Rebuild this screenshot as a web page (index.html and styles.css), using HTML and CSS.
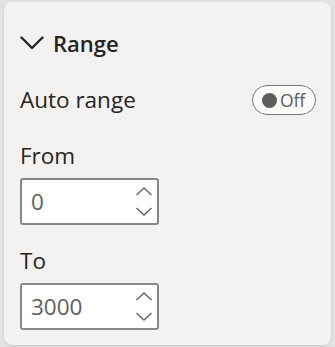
FILE: index.html
```html
<!DOCTYPE html>
<html>
  <head>
    <meta name="viewport" content="width=device-width,initial-scale=1.0">
    <title>Range</title>
    <link rel="stylesheet" href="styles.css">
  </head>
  <body>
    <div class="card">
      <div class="header">
        <svg class="chevron" width="24" height="14" viewBox="0 0 24 14">
          <path d="M1.5 1.5 L12 12 L22.5 1.5" fill="none" stroke="#252423" stroke-width="2.4" stroke-linecap="round" stroke-linejoin="round"/>
        </svg>
        <span class="title">Range</span>
      </div>

      <div class="row">
        <span class="label">Auto range</span>
        <div class="toggle">
          <span class="knob"></span>
          <span class="toggle-text">Off</span>
        </div>
      </div>

      <div class="field first">
        <div class="label">From</div>
        <div class="spin">
          <span class="value">0</span>
          <div class="arrows">
            <svg width="18" height="9" viewBox="0 0 18 9"><path d="M1.5 8 L9 1 L16.5 8" fill="none" stroke="#605e5c" stroke-width="1.3"/></svg>
            <svg width="18" height="9" viewBox="0 0 18 9"><path d="M1.5 1 L9 8 L16.5 1" fill="none" stroke="#605e5c" stroke-width="1.3"/></svg>
          </div>
        </div>
      </div>

      <div class="field">
        <div class="label">To</div>
        <div class="spin">
          <span class="value">3000</span>
          <div class="arrows">
            <svg width="18" height="9" viewBox="0 0 18 9"><path d="M1.5 8 L9 1 L16.5 8" fill="none" stroke="#605e5c" stroke-width="1.3"/></svg>
            <svg width="18" height="9" viewBox="0 0 18 9"><path d="M1.5 1 L9 8 L16.5 1" fill="none" stroke="#605e5c" stroke-width="1.3"/></svg>
          </div>
        </div>
      </div>
    </div>
  </body>
</html>
```

FILE: styles.css
```css
body {
  margin: 0;
  padding: 2px 4px 2px 4px;
  background: #e3e2e0;
  font-family: "Open Sans", "Noto Sans", sans-serif;
  color: #252423;
}

.card {
  height: 343px;
  box-sizing: border-box;
  background: #f3f2f1;
  border-radius: 8px;
  box-shadow: 0 1px 2px rgba(0, 0, 0, 0.12);
  padding: 25px 15px 0 16px;
}

.header {
  display: flex;
  align-items: center;
  height: 32px;
}

.chevron {
  margin-right: 9px;
}

.title {
  font-size: 22px;
  font-weight: 600;
}

.row {
  display: flex;
  align-items: center;
  justify-content: space-between;
  height: 32px;
  margin-top: 25px;
}

.label {
  font-size: 22.5px;
  line-height: 28px;
}

.toggle {
  display: flex;
  align-items: center;
  width: 64px;
  height: 30px;
  box-sizing: border-box;
  border: 1.5px solid #7a7876;
  border-radius: 15px;
  padding-left: 9px;
  background: #fbfbfa;
}

.knob {
  width: 15px;
  height: 15px;
  border-radius: 50%;
  background: #5f5d5b;
  margin-right: 3px;
}

.toggle-text {
  font-size: 17.5px;
  line-height: 20px;
  color: #605e5c;
}

.field.first {
  margin-top: 26px;
}

.field {
  margin-top: 22px;
}

.field .spin {
  margin-top: 8px;
}

.spin {
  display: flex;
  align-items: center;
  justify-content: space-between;
  width: 139px;
  height: 47px;
  box-sizing: border-box;
  border: 2px solid #8a8886;
  border-radius: 3px;
  background: #fff;
  padding: 0 4px 0 9px;
}

.value {
  font-size: 22.5px;
  color: #605e5c;
}

.arrows {
  display: flex;
  flex-direction: column;
  gap: 11px;
}

.arrows svg {
  display: block;
}
```
